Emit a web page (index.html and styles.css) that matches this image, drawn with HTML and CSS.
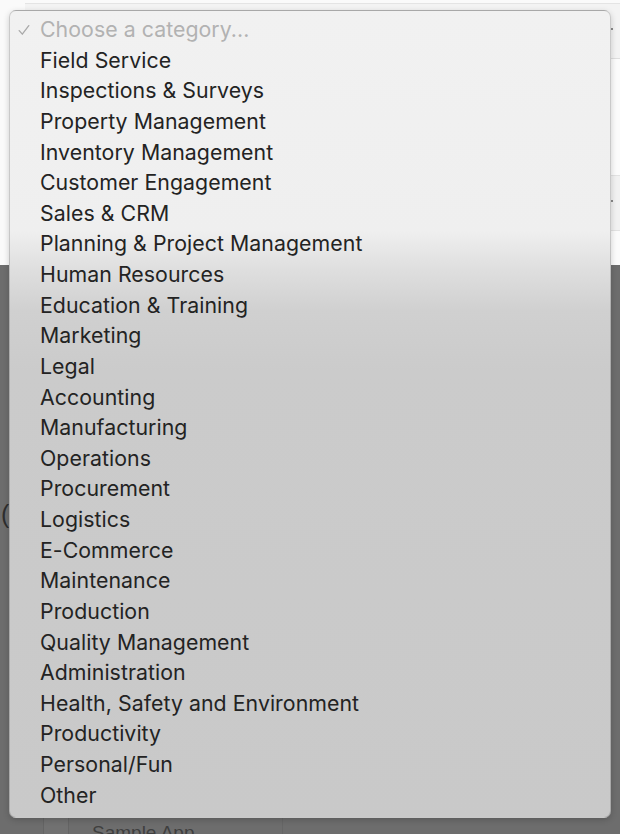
FILE: index.html
```html
<!DOCTYPE html>
<html lang="en">
<head>
<meta charset="utf-8">
<title>Choose a category</title>
<link rel="stylesheet" href="styles.css">
</head>
<body>
<div class="backdrop">
  <div class="page-top">
    <div class="panel">
      <div class="prow prow-a"><span class="arrow-dot"></span></div>
      <div class="prow prow-b"></div>
      <div class="prow prow-c"><span class="arrow-dot"></span></div>
      <div class="prow prow-d"></div>
    </div>
  </div>
  <div class="dim-area">
    <span class="paren">(</span>
    <div class="list-row">
      <div class="col col-a"></div>
      <div class="col col-b"></div>
      <div class="col col-c"><span class="sample">Sample App</span></div>
    </div>
  </div>
</div>

<div class="menu" role="listbox">
  <div class="item placeholder" role="option" aria-selected="true">
    <svg class="check" viewBox="0 0 12 12" width="11" height="11" aria-hidden="true"><path d="M1.2 6.6 L4.3 10.2 L10.8 1.6" fill="none" stroke="currentColor" stroke-width="1.3" stroke-linecap="round" stroke-linejoin="round"/></svg>
    <span>Choose a category...</span>
  </div>
  <div class="item">Field Service</div>
  <div class="item">Inspections &amp; Surveys</div>
  <div class="item">Property Management</div>
  <div class="item">Inventory Management</div>
  <div class="item">Customer Engagement</div>
  <div class="item">Sales &amp; CRM</div>
  <div class="item">Planning &amp; Project Management</div>
  <div class="item">Human Resources</div>
  <div class="item">Education &amp; Training</div>
  <div class="item">Marketing</div>
  <div class="item">Legal</div>
  <div class="item">Accounting</div>
  <div class="item">Manufacturing</div>
  <div class="item">Operations</div>
  <div class="item">Procurement</div>
  <div class="item">Logistics</div>
  <div class="item">E-Commerce</div>
  <div class="item">Maintenance</div>
  <div class="item">Production</div>
  <div class="item">Quality Management</div>
  <div class="item">Administration</div>
  <div class="item">Health, Safety and Environment</div>
  <div class="item">Productivity</div>
  <div class="item">Personal/Fun</div>
  <div class="item">Other</div>
</div>
</body>
</html>
```
FILE: styles.css
```css
html, body {
  margin: 0;
  padding: 0;
}
body {
  width: 620px;
  height: 834px;
  overflow: hidden;
  position: relative;
  font-family: "Inter", "Liberation Sans", "DejaVu Sans", sans-serif;
  background: #6c6c6c;
}

.backdrop {
  display: flex;
  flex-direction: column;
  height: 834px;
}

.page-top {
  height: 265px;
  background: #fafafa;
  display: flex;
  flex-direction: column;
}
.panel {
  margin: 3px 0 0 25px;
  flex: 1;
  display: flex;
  flex-direction: column;
  border-top: 1px solid #e4e4e4;
  background: #fbfbfb;
}
.prow {
  position: relative;
}
.prow-a {
  height: 54px;
  background: #f3f3f3;
  border-bottom: 1px solid #dedede;
}
.prow-b {
  height: 116px;
  background: #fbfbfb;
}
.prow-c {
  height: 54px;
  background: #f1f1f1;
  border-top: 1px solid #e2e2e2;
  border-bottom: 1px solid #e2e2e2;
}
.prow-d {
  flex: 1;
  background: #fbfbfb;
}
.arrow-dot {
  position: absolute;
  right: 7px;
  top: 24px;
  width: 2px;
  height: 2px;
  background: #8a8a8a;
}

.dim-area {
  flex: 1;
  display: flex;
  flex-direction: column;
  background: #6d6d6d;
}
.paren {
  margin: 234px 0 0 1px;
  font-family: "Liberation Sans", sans-serif;
  font-size: 25px;
  line-height: 30px;
  color: #2e2e2e;
}
.list-row {
  margin-top: auto;
  height: 28px;
  display: flex;
}
.col {
  box-sizing: border-box;
}
.col-a {
  width: 43px;
}
.col-b {
  width: 26px;
  border-left: 1px solid #646464;
  border-right: 1px solid #646464;
  background: #717171;
}
.col-c {
  width: 214px;
  border-right: 1px solid #666;
  padding-left: 23px;
  overflow: hidden;
}
.sample {
  display: block;
  margin-top: 16px;
  font-family: "Liberation Sans", sans-serif;
  font-size: 19px;
  line-height: 22px;
  color: #3f3f3f;
  white-space: nowrap;
}

.menu {
  position: absolute;
  left: 9px;
  top: 10px;
  width: 602px;
  height: 808px;
  box-sizing: border-box;
  border: 1px solid rgba(0, 0, 0, 0.16);
  border-radius: 7px;
  background: linear-gradient(to bottom,
    #f1f1f1 0px,
    #efefef 220px,
    #dedede 260px,
    #d0d0d0 300px,
    #cbcbcb 360px,
    #c9c9c9 100%);
  box-shadow: 0 2px 6px rgba(0, 0, 0, 0.18);
  padding: 3px 0 0 0;
}
.item {
  height: 30.64px;
  line-height: 30.64px;
  padding-left: 30px;
  font-size: 21.3px;
  letter-spacing: 0.05px;
  color: #232323;
  white-space: nowrap;
  display: flex;
  align-items: center;
}
.placeholder {
  position: relative;
  color: #b2b2b2;
}
.check {
  position: absolute;
  left: 8px;
  top: 10px;
  width: 12px;
  height: 12px;
  color: #a9a9a9;
}
```
